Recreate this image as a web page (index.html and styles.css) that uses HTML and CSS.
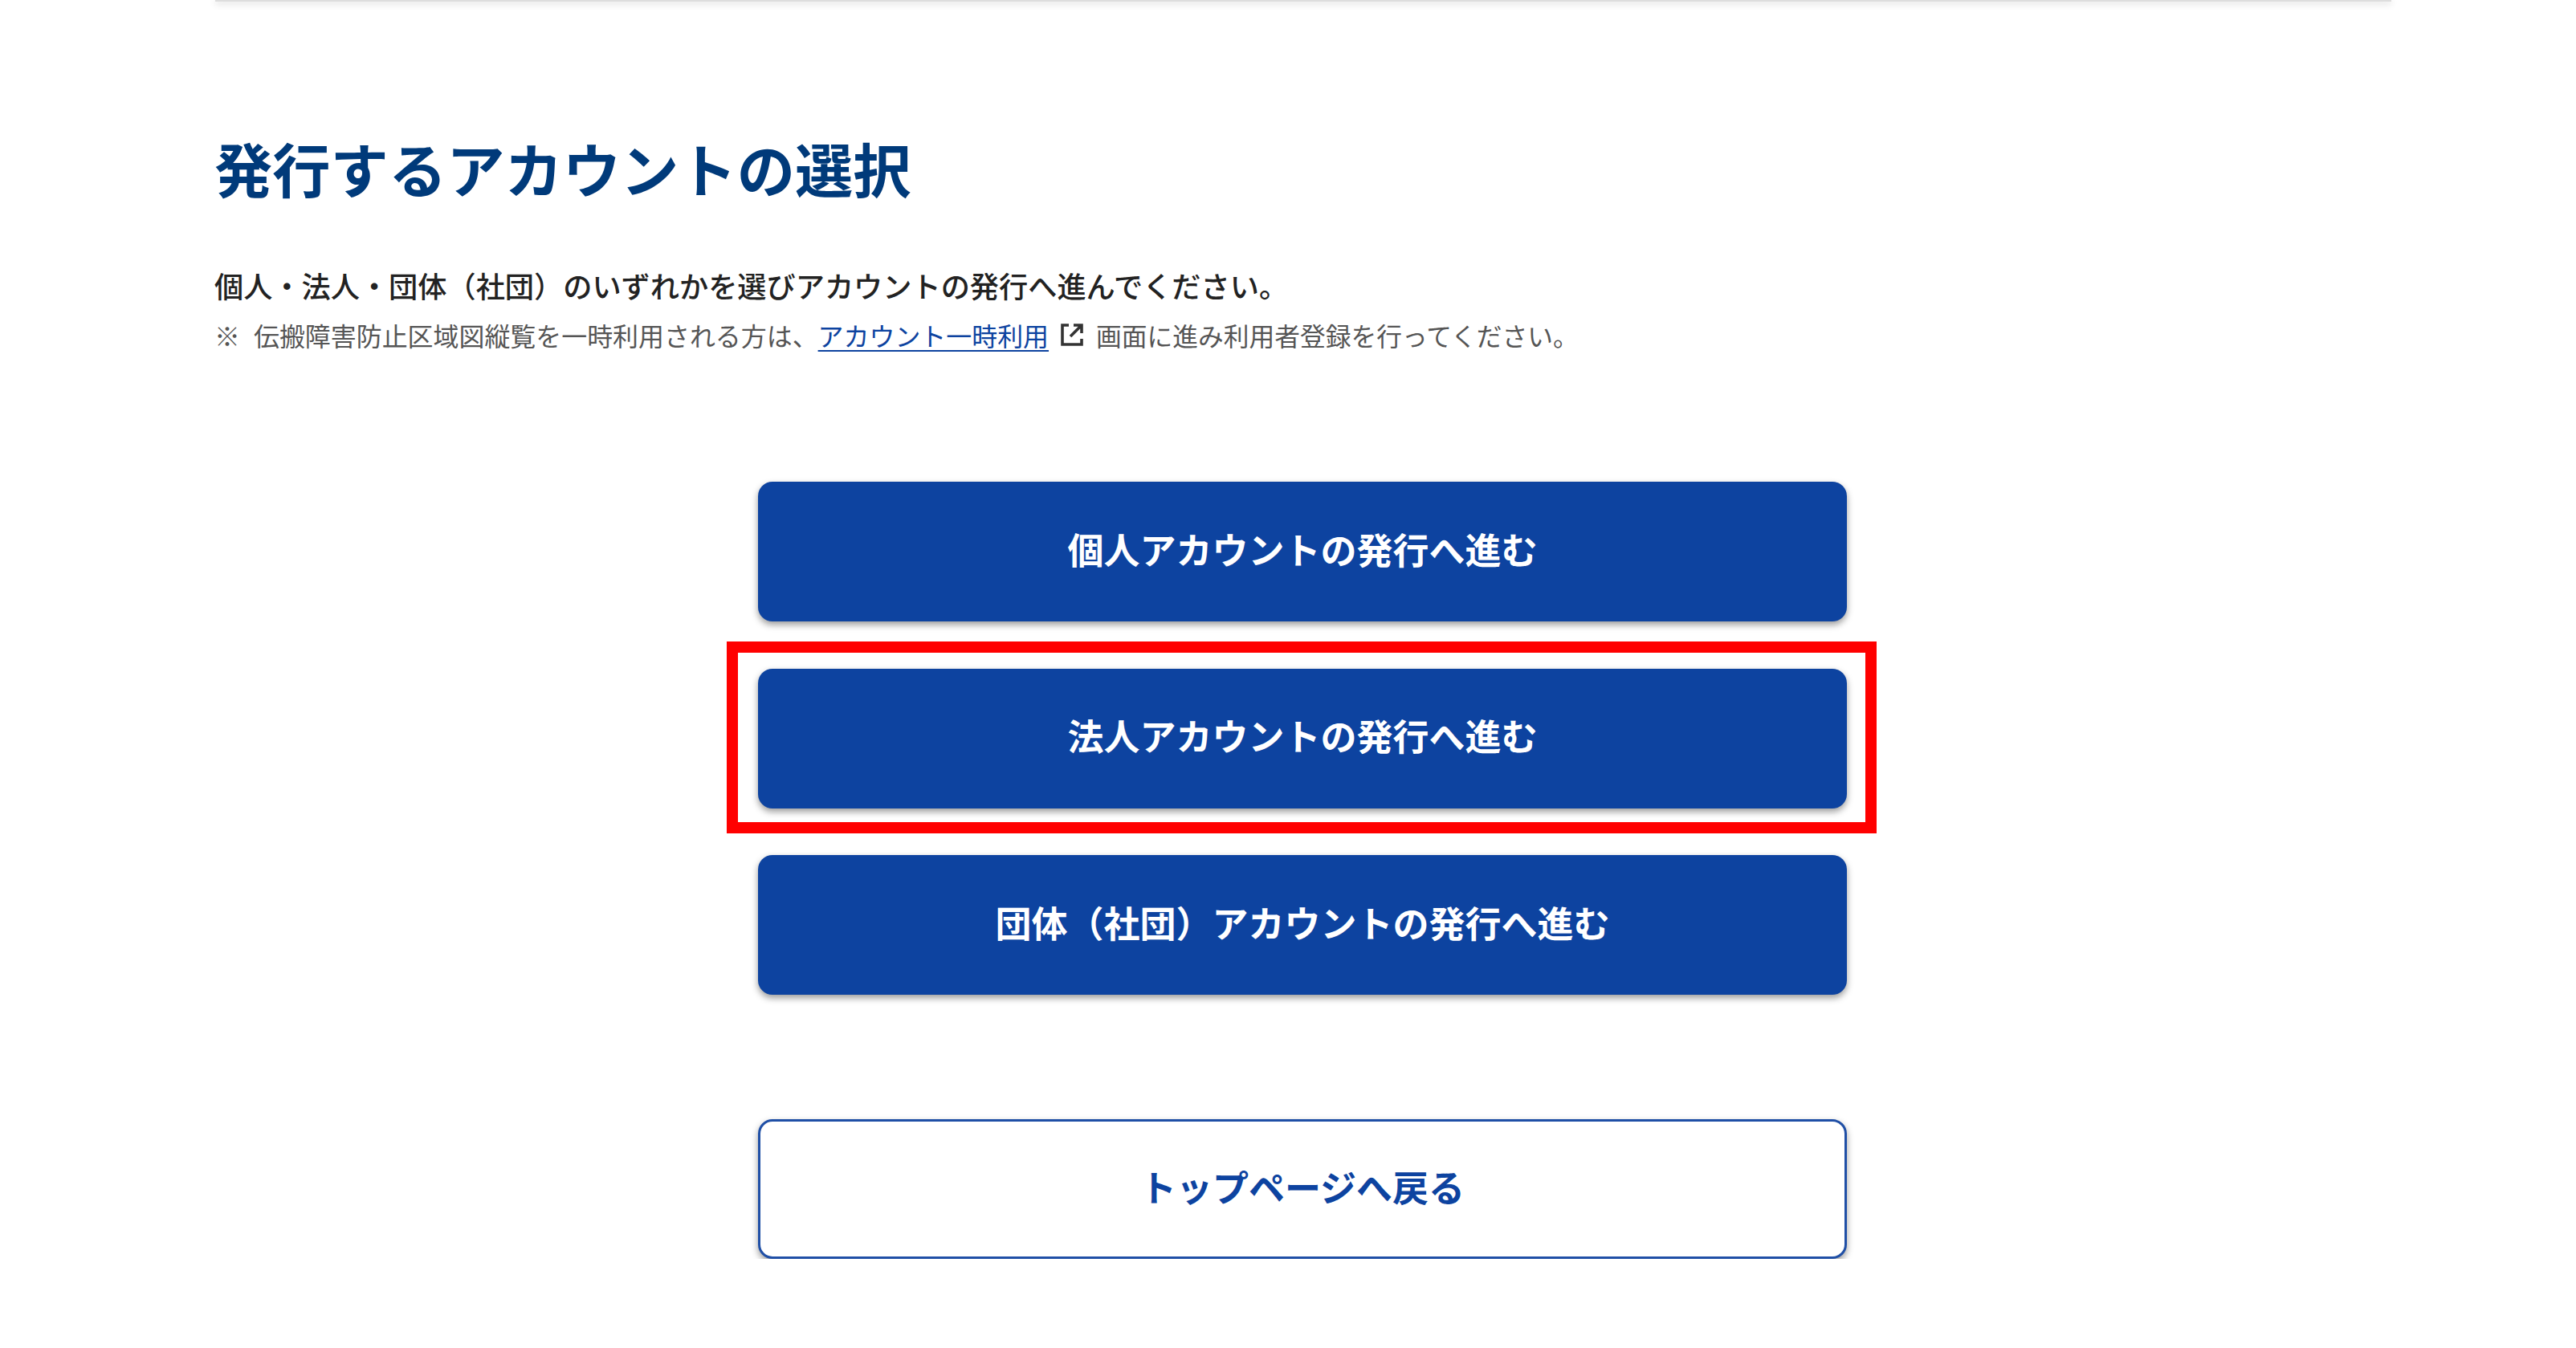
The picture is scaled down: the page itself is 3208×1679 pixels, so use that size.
FILE: index.html
```html
<!DOCTYPE html>
<html lang="ja">
  <head>
    <meta charset="UTF-8" />
    <meta name="viewport" content="width=device-width, initial-scale=1.0" />
    <title>発行するアカウントの選択</title>
    <link rel="stylesheet" href="styles.css">
  </head>
  <body>
    <div class="header-edge"></div>

    <main class="container">
      <h1>発行するアカウントの選択</h1>

      <p class="lead">個人・法人・団体（社団）のいずれかを選びアカウントの発行へ進んでください。</p>
      <p class="note">
        <span class="note-mark">※</span>伝搬障害防止区域図縦覧を一時利用される方は、<a href="#" class="note-link">アカウント一時利用</a><svg class="external-icon" viewBox="0 0 30 30" fill="none" stroke="#333" stroke-width="3.6">
          <path d="M11 3H3v24h24v-7" />
          <path d="M13 17L26 4M17 3h10v10" />
        </svg><span class="note-tail">画面に進み利用者登録を行ってください。</span>
      </p>

      <div class="actions">
        <a href="#" class="btn btn-primary">個人アカウントの発行へ進む</a>
        <a href="#" class="btn btn-primary btn-marked">法人アカウントの発行へ進む</a>
        <a href="#" class="btn btn-primary">団体（社団）アカウントの発行へ進む</a>
        <a href="#" class="btn btn-outline">トップページへ戻る</a>
      </div>
    </main>
  </body>
</html>
```

FILE: styles.css
```css
* {
  margin: 0;
  padding: 0;
  box-sizing: border-box;
  font-family: "Noto Sans CJK JP", "Noto Sans", sans-serif;
}

body {
  background-color: #fff;
  color: #222;
}

.header-edge {
  height: 2px;
  margin: 0 230px 0 268px;
  background-color: #ddd;
  box-shadow: 0 2px 8px rgba(0, 0, 0, 0.3);
}

.container {
  padding: 0 230px 0 267px;
}

h1 {
  margin-top: 159px;
  font-size: 72.3px;
  line-height: 96px;
  font-weight: 700;
  color: #003a7a;
}

.lead {
  margin-top: 73px;
  font-size: 36.2px;
  line-height: 50px;
  font-weight: 500;
}

.note {
  display: flex;
  align-items: center;
  margin-top: 12px;
  font-size: 31.95px;
  line-height: 50px;
  color: #555;
}

.note-mark {
  margin-right: 17px;
}

.note-link {
  color: #0d43a0;
  text-decoration-thickness: 2px;
  text-underline-offset: 5px;
}

.note-tail {
  font-size: 31.75px;
}

.external-icon {
  width: 30px;
  height: 30px;
  margin: 0 15px 0 14px;
}

.actions {
  display: flex;
  flex-direction: column;
  align-items: center;
  gap: 58.5px;
  width: 1356px;
  margin: 158px 0 0 677px;
}

.btn {
  display: flex;
  align-items: center;
  justify-content: center;
  width: 100%;
  height: 174px;
  padding-bottom: 8px;
  border-radius: 18px;
  font-size: 45px;
  font-weight: 700;
  text-decoration: none;
  box-shadow: 0 4px 8px rgba(0, 0, 0, 0.4);
}

.btn-primary {
  background-color: #0d43a0;
  color: white;
}

.btn-outline {
  margin-top: 96.5px;
  background-color: white;
  border: 3px solid #1f4fa6;
  color: #0d43a0;
}

.btn-marked {
  position: relative;
}

/* red annotation frame around the second button */
.btn-marked::after {
  content: "";
  position: absolute;
  top: -34px;
  right: -37px;
  bottom: -31px;
  left: -39px;
  border: 14px solid #f00;
}
```
